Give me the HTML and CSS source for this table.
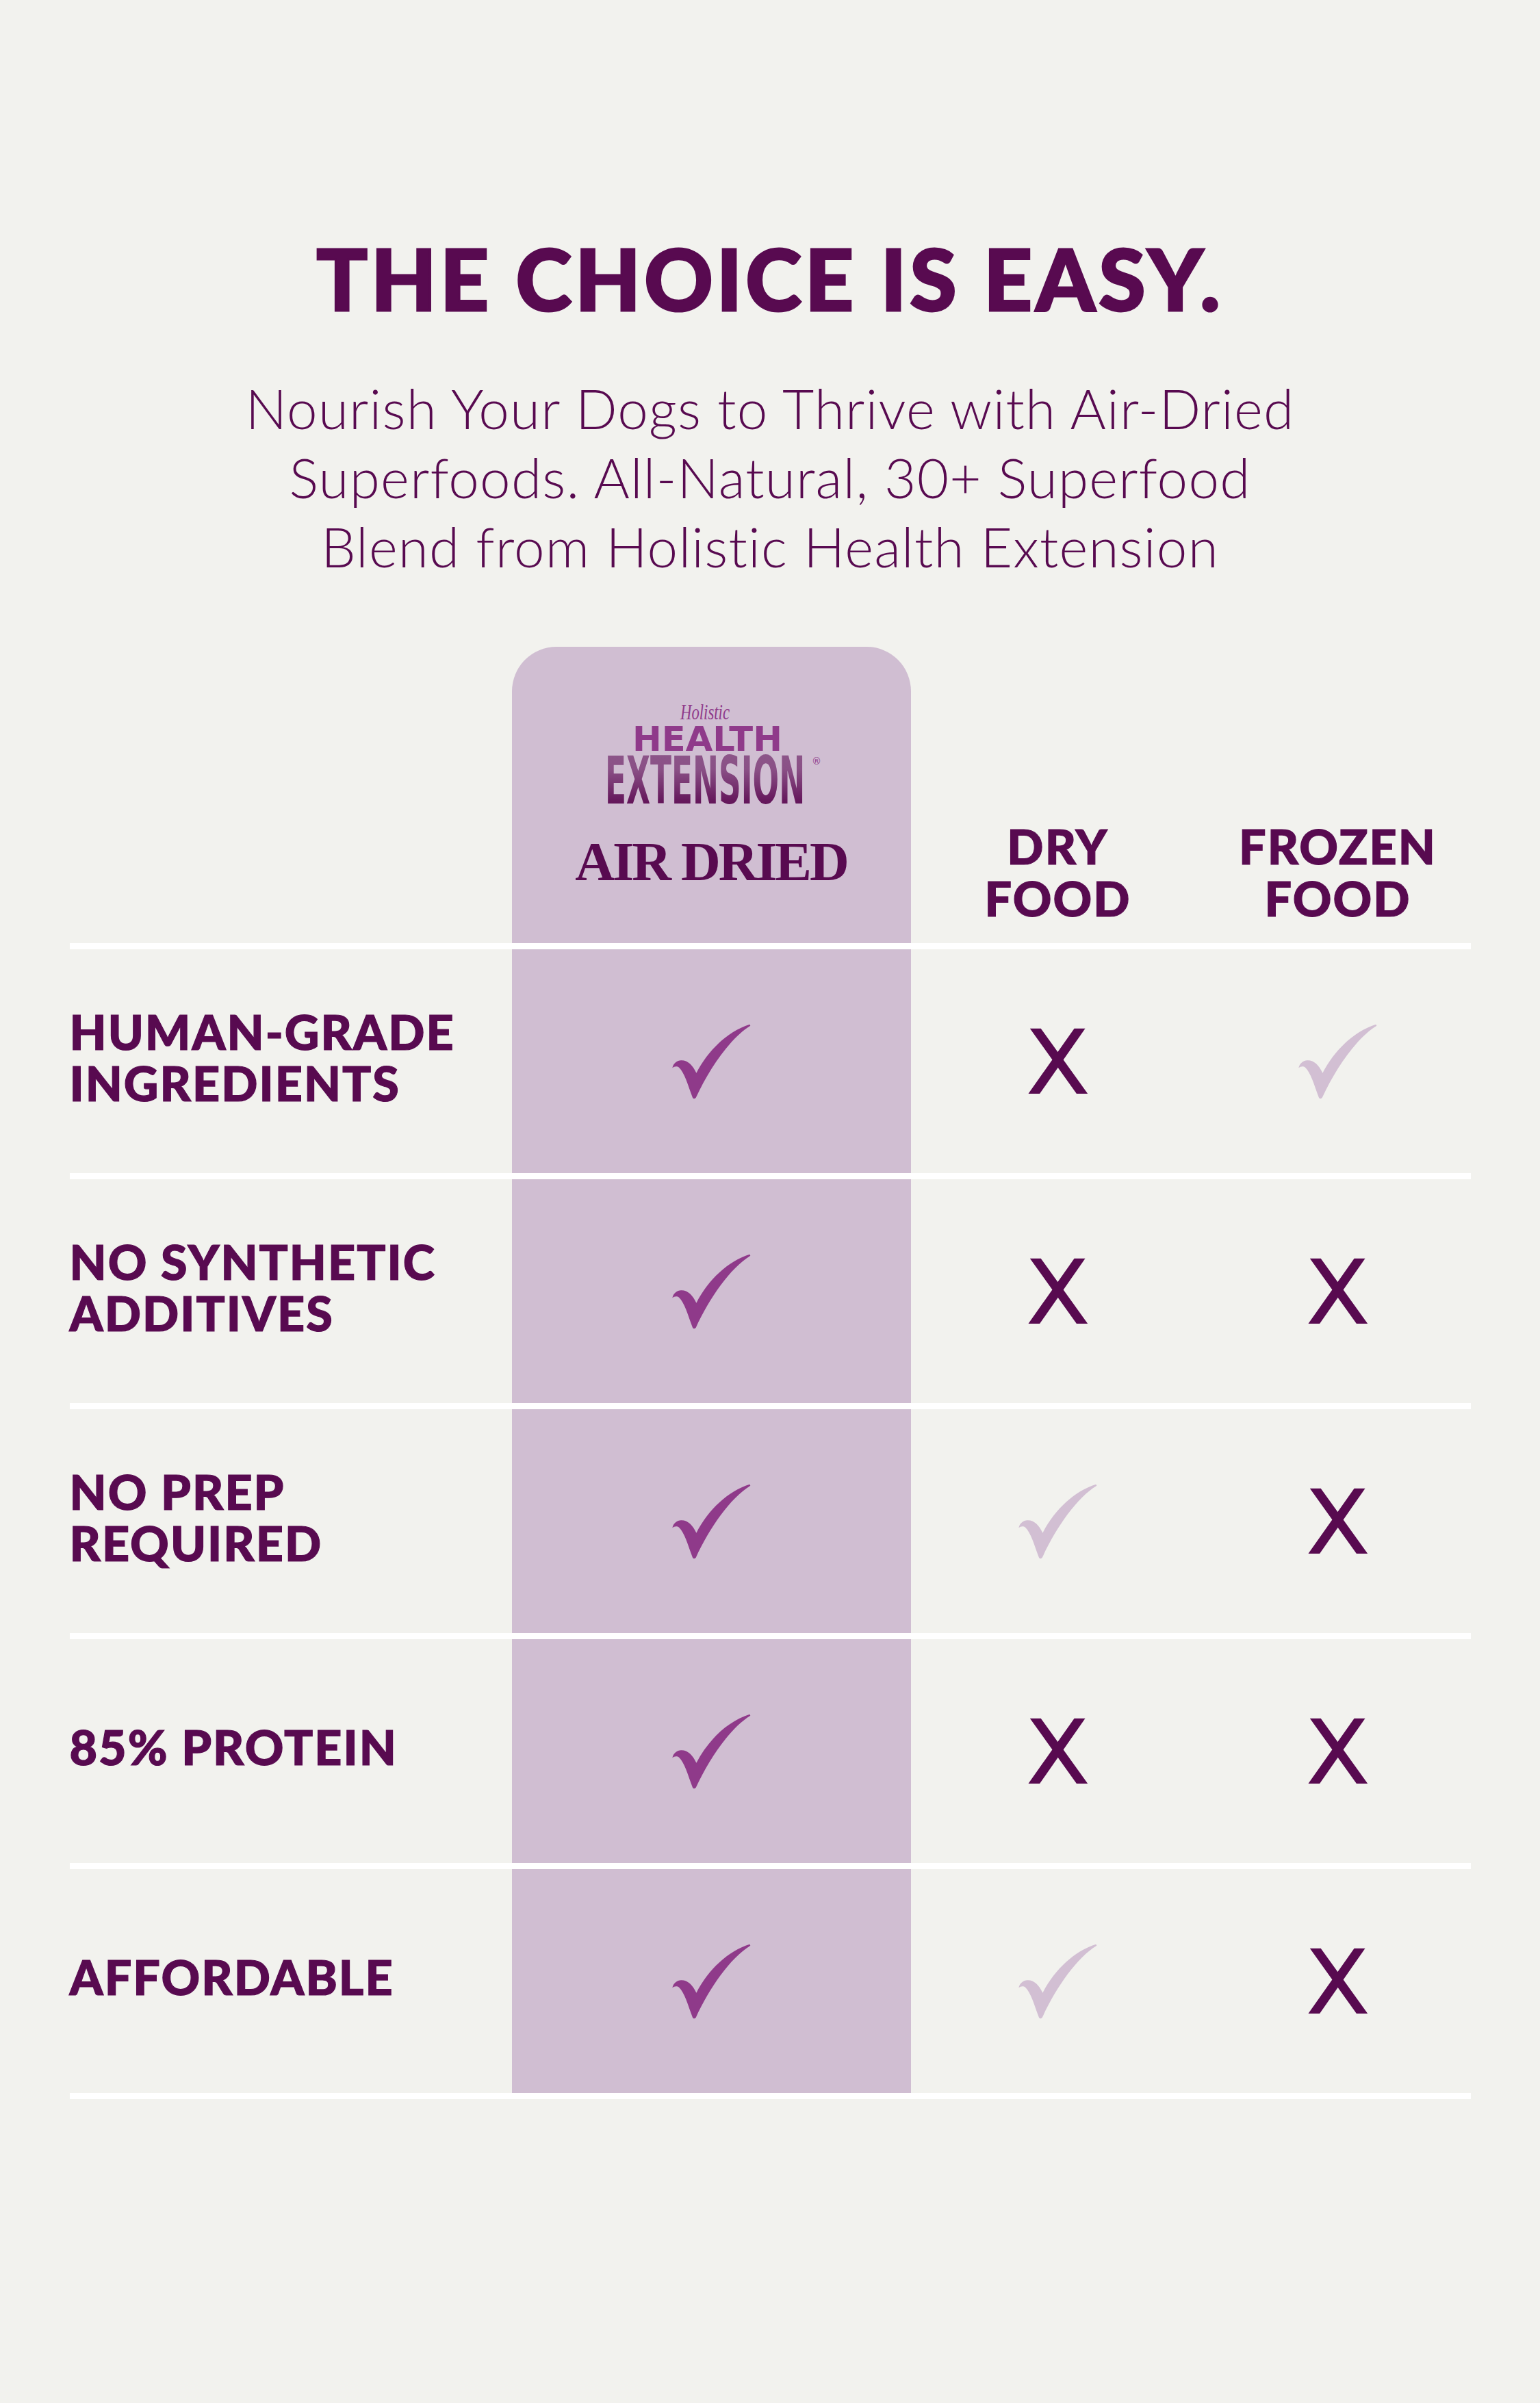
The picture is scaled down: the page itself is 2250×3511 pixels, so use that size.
FILE: index.html
```html
<!DOCTYPE html>
<html lang="en">
<head>
<meta charset="utf-8">
<title>The Choice Is Easy</title>
<link rel="stylesheet" href="styles.css">
</head>
<body>
<svg class="defs" width="0" height="0" aria-hidden="true">
  <symbol id="check" viewBox="60 72 356 340">
    <path fill="currentColor" d="M67 270 C72 248 88 238 105 237 C135 236 155 258 172 292 C225 190 310 110 405 80 L408 86 C320 140 230 270 170 400 C166 406 158 406 155 398 C135 345 120 290 96 268 C88 262 76 262 67 270 Z"/>
  </symbol>
  <symbol id="cross" viewBox="90 88 270 292">
    <polygon fill="currentColor" points="101,90 149,90 355,377 306,377"/>
    <polygon fill="currentColor" points="296,90 344,90 144,377 94,377"/>
  </symbol>
</svg>
<main class="page">
  <h1 class="title">THE CHOICE IS EASY.</h1>
  <p class="subtitle">Nourish Your Dogs to Thrive with Air-Dried<br>Superfoods. All-Natural, 30+ Superfood<br>Blend from Holistic Health Extension</p>

  <div class="table">
    <div class="row head">
      <div class="cell"></div>
      <div class="cell hl brand">
        <svg class="logo" viewBox="0 -20 320 210" role="img" aria-label="Holistic Health Extension">
          <defs>
            <linearGradient id="extGrad" x1="0" y1="0" x2="0" y2="1">
              <stop offset="0" stop-color="#8e5a8b"/>
              <stop offset="0.35" stop-color="#8a5086"/>
              <stop offset="0.75" stop-color="#66195d"/>
              <stop offset="1" stop-color="#580a50"/>
            </linearGradient>
          </defs>
          <text class="lg-holistic" x="115" y="26" textLength="72" lengthAdjust="spacingAndGlyphs">Holistic</text>
          <text class="lg-health" x="45" y="72" textLength="219" lengthAdjust="spacingAndGlyphs">HEALTH</text>
          <text class="lg-ext" transform="translate(5 149) scale(0.473 1)" fill="url(#extGrad)">EXTENSION</text>
          <text class="lg-reg" x="307" y="92">®</text>
        </svg>
        <div class="brand-name">AIR DRIED</div>
      </div>
      <div class="cell colhead"><div class="colhead-text">DRY FOOD</div></div>
      <div class="cell colhead"><div class="colhead-text">FROZEN FOOD</div></div>
    </div>

    <div class="row">
      <div class="cell label"><div class="label-text">HUMAN-GRADE INGREDIENTS</div></div>
      <div class="cell hl"><svg class="check"><use href="#check"/></svg></div>
      <div class="cell"><svg class="cross"><use href="#cross"/></svg></div>
      <div class="cell"><svg class="check dim"><use href="#check"/></svg></div>
    </div>

    <div class="row">
      <div class="cell label"><div class="label-text">NO SYNTHETIC ADDITIVES</div></div>
      <div class="cell hl"><svg class="check"><use href="#check"/></svg></div>
      <div class="cell"><svg class="cross"><use href="#cross"/></svg></div>
      <div class="cell"><svg class="cross"><use href="#cross"/></svg></div>
    </div>

    <div class="row">
      <div class="cell label"><div class="label-text">NO PREP REQUIRED</div></div>
      <div class="cell hl"><svg class="check"><use href="#check"/></svg></div>
      <div class="cell"><svg class="check dim"><use href="#check"/></svg></div>
      <div class="cell"><svg class="cross"><use href="#cross"/></svg></div>
    </div>

    <div class="row">
      <div class="cell label"><div class="label-text">85% PROTEIN</div></div>
      <div class="cell hl"><svg class="check"><use href="#check"/></svg></div>
      <div class="cell"><svg class="cross"><use href="#cross"/></svg></div>
      <div class="cell"><svg class="cross"><use href="#cross"/></svg></div>
    </div>

    <div class="row">
      <div class="cell label"><div class="label-text">AFFORDABLE</div></div>
      <div class="cell hl"><svg class="check"><use href="#check"/></svg></div>
      <div class="cell"><svg class="check dim"><use href="#check"/></svg></div>
      <div class="cell"><svg class="cross"><use href="#cross"/></svg></div>
    </div>
  </div>
</main>
</body>
</html>
```

FILE: styles.css
```css
html, body {
  margin: 0;
  padding: 0;
  background: #f2f2ee;
}

.defs {
  position: absolute;
  width: 0;
  height: 0;
  overflow: hidden;
}

.page {
  padding-top: 344px;
  text-align: center;
  color: #580a50;
}

.title {
  margin: 0;
  font-family: Lato, "Noto Sans", sans-serif;
  font-weight: 900;
  font-size: 124px;
  line-height: 1;
  letter-spacing: 5px;
  -webkit-text-stroke: 3px #580a50;
}

.subtitle {
  margin: 78px 0 0;
  font-family: Lato, "Noto Sans", sans-serif;
  font-weight: 300;
  font-size: 80px;
  line-height: 101px;
  letter-spacing: 1.2px;
}

.table {
  width: 2047px;
  margin: 96px auto 0;
  border-bottom: 9px solid #ffffff;
  text-align: left;
}

.row {
  display: grid;
  grid-template-columns: 646px 583px 430px 388px;
  height: 327px;
  border-top: 9px solid #ffffff;
}

.row.head {
  height: 433px;
  border-top: 0;
}

.cell {
  display: flex;
  align-items: center;
  justify-content: center;
}

.hl {
  background: #d0bed2;
}

.brand {
  flex-direction: column;
  justify-content: flex-start;
  border-radius: 65px 65px 0 0;
  padding-top: 60px;
}

.logo {
  display: block;
  width: 320px;
  height: 210px;
}

.lg-holistic {
  font-family: "Liberation Serif", serif;
  font-style: italic;
  font-size: 32px;
  fill: #8f3a8a;
}

.lg-health {
  font-family: "DejaVu Sans", sans-serif;
  font-weight: 700;
  font-size: 49px;
  fill: #8f3a8a;
}

.lg-ext {
  font-family: "DejaVu Sans", sans-serif;
  font-weight: 700;
  font-size: 96px;
}

.lg-reg {
  font-family: "DejaVu Sans", sans-serif;
  font-size: 14px;
  fill: #8f3a8a;
}

.brand-name {
  margin-top: 4px;
  font-family: "Liberation Serif", serif;
  font-weight: 700;
  font-size: 80px;
  line-height: 1;
  letter-spacing: -3px;
  color: #580a50;
}

.label,
.colhead {
  font-family: Lato, "Noto Sans", sans-serif;
  font-weight: 900;
  font-size: 70px;
  letter-spacing: 2px;
  -webkit-text-stroke: 1.2px #580a50;
}

.label {
  justify-content: flex-start;
  line-height: 75px;
  padding-bottom: 12px;
}

.label-text {
  max-width: 600px;
}

.colhead {
  flex-direction: column;
  justify-content: flex-end;
  padding-bottom: 28px;
  line-height: 76px;
  text-align: center;
}

.colhead-text {
  max-width: 320px;
}

.check {
  width: 119px;
  height: 114px;
  color: #8f3a8a;
}

.check.dim {
  color: #d2bfd3;
}

.cross {
  width: 90px;
  height: 97px;
  color: #580a50;
}
```
